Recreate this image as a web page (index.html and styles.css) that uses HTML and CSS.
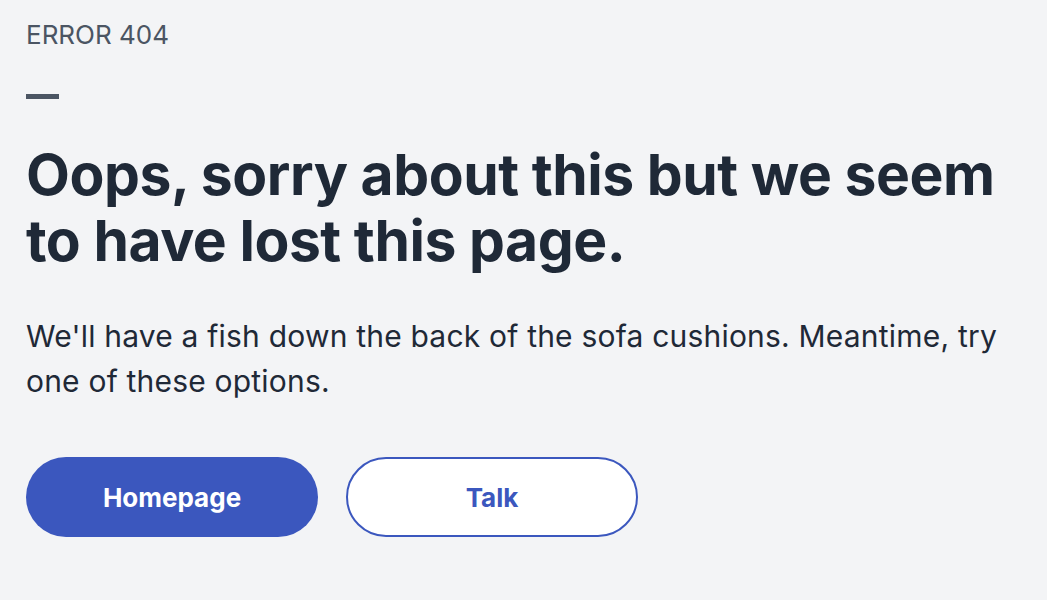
FILE: index.html
```html
<!DOCTYPE html>
<html lang="en">
<head>
<meta charset="utf-8">
<title>Error 404</title>
<link rel="stylesheet" href="styles.css">
</head>
<body>
<main class="page">
  <p class="eyebrow">ERROR 404</p>
  <div class="dash"></div>
  <h1 class="title">Oops, sorry about this but we seem to have lost this page.</h1>
  <p class="lead">We'll have a fish down the back of the sofa cushions. Meantime, try one of these options.</p>
  <div class="actions">
    <a class="btn btn-primary" href="#">Homepage</a>
    <a class="btn btn-outline" href="#">Talk</a>
  </div>
</main>
</body>
</html>
```
FILE: styles.css
```css
* { box-sizing: border-box; }
html, body { margin: 0; background: #f3f4f6; }
body { font-family: Inter, "Noto Sans", sans-serif; color: #1f2937; }
.page { padding: 20px 26px 0; display: flex; flex-direction: column; align-items: flex-start; width: 1047px; }
.eyebrow { margin: 0; font-size: 26px; line-height: 30px; color: #4b5563; }
.dash { width: 33px; height: 5px; background: #4b5563; margin-top: 44px; }
.title { margin: 43px 0 0; font-size: 57px; line-height: 66px; font-weight: 700; letter-spacing: -0.45px; color: #1f2937; max-width: 995px; }
.lead { margin: 40px 0 0; font-size: 30px; line-height: 45px; letter-spacing: 0.2px; color: #1f2937; max-width: 995px; }
.actions { display: flex; gap: 28px; margin-top: 53px; }
.btn { width: 292px; height: 80px; border-radius: 40px; display: flex; align-items: center; justify-content: center; font-size: 26px; font-weight: 700; text-decoration: none; }
.btn-primary { background: #3b57be; color: #fff; }
.btn-outline { background: #fff; color: #3b57be; border: 2px solid #3b57be; }
```
